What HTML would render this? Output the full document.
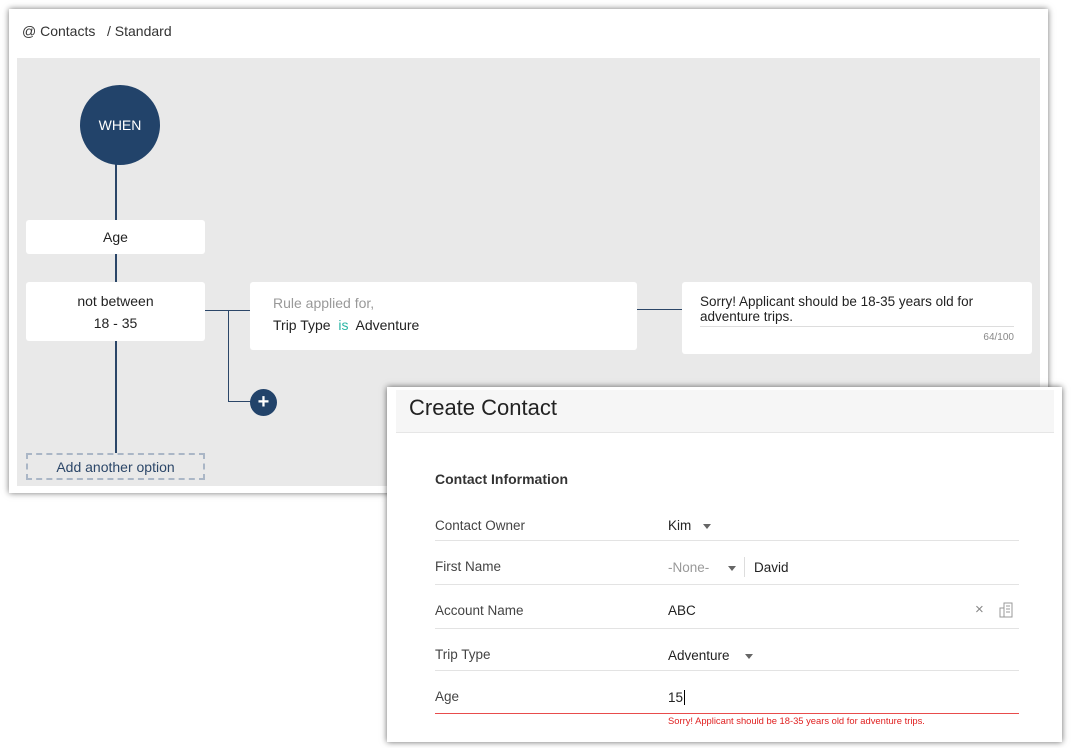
<!DOCTYPE html>
<html><head><meta charset="utf-8"><style>
*{margin:0;padding:0;box-sizing:border-box}
body{width:1072px;height:748px;background:#fff;position:relative;overflow:hidden;font-family:"Liberation Sans",sans-serif;color:#222}
.a{position:absolute}
.box{position:absolute;background:#fff;border-radius:3px}
.ln{position:absolute;background:#2b4668}
.lbl{position:absolute;left:435px;font-size:13.5px;color:#444}
.val{position:absolute;left:668px;font-size:13.5px;color:#222}
.hr{position:absolute;left:435px;width:584px;height:1px;background:#e3e3e3}
.tri{display:inline-block;width:0;height:0;border-left:4px solid transparent;border-right:4px solid transparent;border-top:5px solid #666;vertical-align:middle}
</style></head><body>
<div class="a" style="left:9px;top:9px;width:1039px;height:484px;background:#fff;box-shadow:0 0 6px rgba(0,0,0,.55)"></div>
<div class="a" style="left:22px;top:23px;font-size:14px;color:#333">@ Contacts &nbsp;&nbsp;/ Standard</div>
<div class="a" style="left:17px;top:58px;width:1023px;height:428px;background:#e9e9e9"></div>
<div class="ln" style="left:115px;top:160px;width:2px;height:295px"></div>
<div class="a" style="left:80px;top:85px;width:80px;height:80px;border-radius:50%;background:#22436a;color:#fff;font-size:14px;text-align:center;line-height:80px">WHEN</div>
<div class="box" style="left:26px;top:220px;width:179px;height:34px;text-align:center;line-height:34px;font-size:14px">Age</div>
<div class="box" style="left:26px;top:282px;width:179px;height:59px;text-align:center;font-size:14px;line-height:22px;padding-top:8px">not between<br>18 - 35</div>
<div class="a" style="left:26px;top:453px;width:179px;height:27px;border:2px dashed #aab6c6;text-align:center;line-height:24px;font-size:14px;color:#2b4668;background:#e9e9e9">Add another option</div>
<div class="ln" style="left:205px;top:310px;width:45px;height:1px"></div>
<div class="ln" style="left:228px;top:310px;width:1px;height:92px"></div>
<div class="ln" style="left:228px;top:401px;width:24px;height:1px"></div>
<div class="a" style="left:250px;top:389px;width:27px;height:27px;border-radius:50%;background:#22436a;color:#fff;text-align:center;line-height:26px;font-size:20px;font-weight:bold">+</div>
<div class="box" style="left:250px;top:282px;width:387px;height:68px;padding:10px 23px;font-size:14px;line-height:22px"><span style="color:#999">Rule applied for,</span><br>Trip Type &nbsp;<span style="color:#2ab5a5">is</span>&nbsp; Adventure</div>
<div class="ln" style="left:637px;top:309px;width:45px;height:1px"></div>
<div class="box" style="left:682px;top:282px;width:350px;height:72px;padding:12px 18px;font-size:13.5px;line-height:15px">Sorry! Applicant should be 18-35 years old for adventure trips.
<div style="border-top:1px solid #ddd;margin-top:2px;text-align:right;font-size:10px;color:#888;padding-top:3px">64/100</div></div>
<div class="a" style="left:387px;top:387px;width:675px;height:355px;background:#fff;box-shadow:0 0 6px rgba(0,0,0,.6)"></div>
<div class="a" style="left:396px;top:390px;width:658px;height:43px;background:#f6f6f6;border-bottom:1px solid #e6e6e6"></div>
<div class="a" style="left:409px;top:395px;font-size:22px;color:#222">Create Contact</div>
<div class="a" style="left:435px;top:471px;font-size:14px;font-weight:bold;color:#333">Contact Information</div>
<div class="lbl" style="top:518px">Contact Owner</div><div class="val" style="top:518px">Kim &nbsp;&nbsp;<span class="tri"></span></div><div class="hr" style="top:540px"></div>
<div class="lbl" style="top:559px">First Name</div><div class="val" style="top:560px"><span style="color:#999">-None-</span> &nbsp;&nbsp;&nbsp;&nbsp;<span class="tri"></span></div><div class="a" style="left:744px;top:557px;width:1px;height:20px;background:#ddd"></div><div class="val" style="left:754px;top:560px">David</div><div class="hr" style="top:584px"></div>
<div class="lbl" style="top:603px">Account Name</div><div class="val" style="top:603px">ABC</div><div class="a" style="left:975px;top:601px;font-size:15px;color:#888">×</div>
<svg class="a" style="left:999px;top:602px" width="15" height="16" viewBox="0 0 15 16"><rect x="5" y="1" width="8" height="14" fill="none" stroke="#999"/><rect x="1" y="6" width="4" height="9" fill="none" stroke="#999"/><path d="M7 4h4M7 7h4M7 10h4" stroke="#999"/></svg>
<div class="hr" style="top:628px"></div>
<div class="lbl" style="top:647px">Trip Type</div><div class="val" style="top:648px">Adventure &nbsp;&nbsp;&nbsp;<span class="tri"></span></div><div class="hr" style="top:670px"></div>
<div class="lbl" style="top:689px">Age</div><div class="val" style="top:690px">15<span style="border-left:1px solid #000;margin-left:1px"></span></div>
<div class="a" style="left:435px;top:713px;width:584px;height:1px;background:#e84c4c"></div>
<div class="a" style="left:668px;top:715px;font-size:9.4px;color:#e02020">Sorry! Applicant should be 18-35 years old for adventure trips.</div>
</body></html>
